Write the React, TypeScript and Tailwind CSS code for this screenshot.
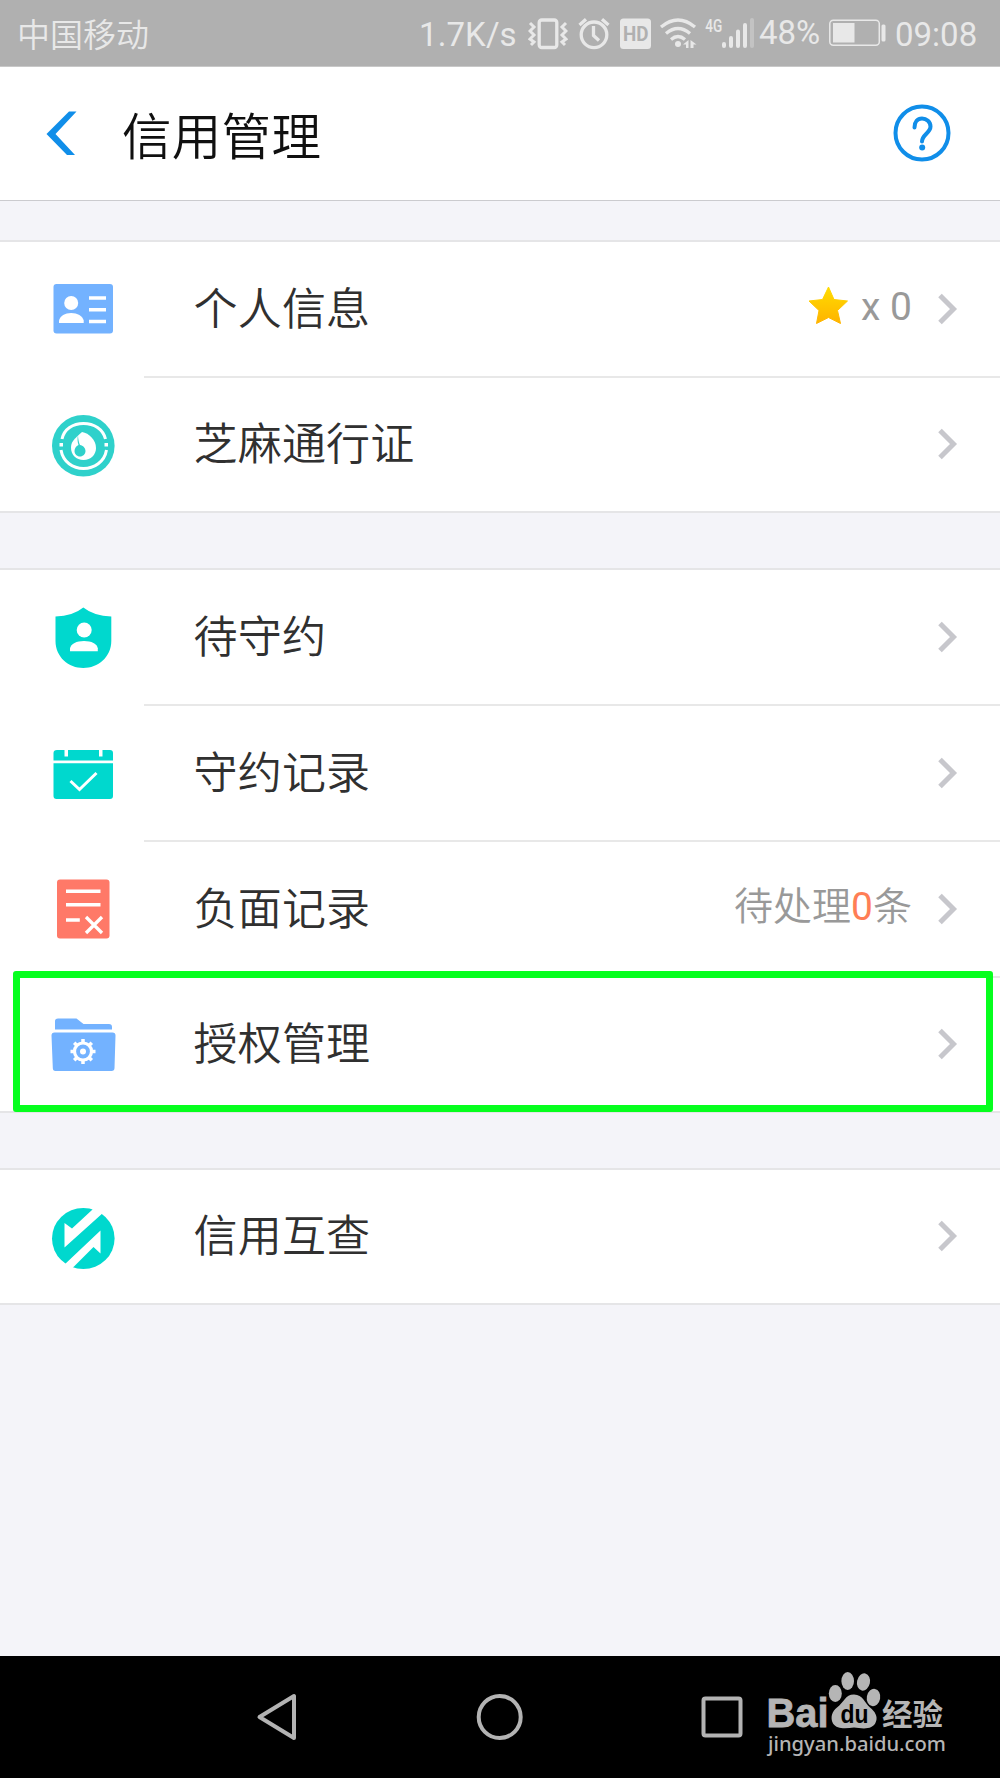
import React from "react";

const cjk = "font-['Roboto','Noto_Sans_CJK_SC',sans-serif]";

function StatusBar() {
  return (
    <div className="flex h-[67px] shrink-0 items-start border-b border-[#c8c8c8] bg-[#b0b0b0] text-[33px] leading-[70px] text-[#e8e8e8]">
      <span className="ml-[17px] w-[402px] font-[350] leading-[71px]">中国移动</span>
      <span className="w-[109px] tracking-[0.1px]">1.7K/s</span>
      <svg className="h-[66px] w-10 shrink-0" viewBox="528 0 40 66" fill="none" stroke="#e8e8e8">
        <rect x="539.2" y="20" width="17.6" height="27.5" rx="2.5" strokeWidth="3.3" />
        <path d="M530 23l4 4-4 4 4 4-4 4 4 3-3 3M566 23l-4 4 4 4-4 4 4 4-4 3 3 3" strokeWidth="3" />
      </svg>
      <svg className="ml-[10px] h-[66px] w-8 shrink-0" viewBox="578 0 32 66" fill="none" stroke="#e8e8e8" strokeWidth="3.3">
        <circle cx="594" cy="34.8" r="12.8" />
        <path d="M593.5 26v9.5l5.5 5M579.5 25l6.5-5.7M608.5 25l-6.500-5.700" />
      </svg>
      <svg className="ml-[10px] h-[66px] w-[31px] shrink-0" viewBox="620 0 31 66">
        <rect x="620" y="18.500" width="31" height="30.500" rx="3.500" fill="#e8e8e8" />
        <text x="623" y="41" fontSize="20" fontWeight="700" fill="#b0b0b0" textLength="25.500" lengthAdjust="spacingAndGlyphs">HD</text>
      </svg>
      <svg className="ml-[8px] h-[66px] w-[38px] shrink-0" viewBox="659 0 38 66" fill="none" stroke="#e8e8e8" strokeWidth="3.300">
        <path d="M661 27Q678 13 695 27M666 33.500Q678 23.500 690 33.500M671 39.500Q678 33.500 685 39.500" />
        <circle cx="678" cy="44" r="3" fill="#e8e8e8" stroke="none" />
        <path d="M683 44.500l5.500-4.500v8h-2.500v-3.500zM690.500 40l6 4.500h-3v3.500h-3z" fill="#e8e8e8" stroke="none" />
      </svg>
      <svg className="ml-[6px] h-[66px] w-[21px] shrink-0" viewBox="703 0 21 66" fill="#e8e8e8">
        <text x="705.300" y="31.500" fontSize="19" fontWeight="500" textLength="17" lengthAdjust="spacingAndGlyphs">4G</text>
      </svg>
      <svg className="-ml-[2px] h-[66px] w-[33px] shrink-0" viewBox="722 0 33 66" stroke="#e8e8e8" strokeWidth="4" strokeLinecap="round">
        <path d="M724 44v2M731 38v8M738 31.500V46M745 25v21" />
        <path d="M752 20v26" stroke="#c3c3c3" />
      </svg>
      <span className="ml-[4px] w-[69px] leading-[66px]">48%</span>
      <svg className="h-[66px] w-[59px] shrink-0" viewBox="828 0 59 66" fill="none">
        <rect x="829.800" y="20.200" width="49.500" height="25" rx="3.500" stroke="#e8e8e8" strokeWidth="1.500" />
        <path d="M833 23h21.500v19.500H833z" fill="#e8e8e8" />
        <rect x="881.500" y="24.500" width="4" height="17" rx="1.500" fill="#e8e8e8" />
      </svg>
      <span className="ml-[8px]">09:08</span>
    </div>
  );
}

function Header() {
  return (
    <header className="flex h-[134px] shrink-0 items-center border-b border-[#cbcbcf] bg-white">
      <svg className="-mt-[2px] ml-[46px] h-[44px] w-[32px]" viewBox="46 111 32 44" fill="#108ee9">
        <path d="M69 111.500h7.500L55.500 134l19.500 21h-8L46.500 134z" />
      </svg>
      <h1 className="ml-[44px] mt-[11px] text-[49.500px] font-[350] leading-none tracking-[0.3px] text-[#101010]">信用管理</h1>
      <svg className="-mt-[1px] ml-auto mr-[48px] h-[60px] w-[60px]" viewBox="892 103 60 60" fill="none" stroke="#108ee9">
        <circle cx="922" cy="133" r="26.500" strokeWidth="4" />
        <path d="M914.500 127.500c0-6 3-9 7.500-9s8.500 3.500 8.500 8c0 6.500-8.500 8-8.500 15" strokeWidth="4" strokeLinecap="round" />
        <circle cx="922.200" cy="147.500" r="3" fill="#108ee9" stroke="none" />
      </svg>
    </header>
  );
}

const IdCard = () => (
  <>
    <rect x="53.500" y="284" width="59.500" height="49.500" rx="3" fill="#73b2ff" />
    <g fill="#fff">
      <circle cx="71.200" cy="303" r="7" />
      <path d="M59 323v-2.500c1-4.500 6-7.500 12.200-7.500s11.500 3 12.500 7.500v2.500z" />
      <path d="M89 296.200h17v3.600H89zM89 308h17v3.600H89zM89 319.700h17v3.600H89z" />
    </g>
  </>
);

const Pass = () => (
  <>
    <ellipse cx="83.300" cy="445.800" rx="31.300" ry="30.800" fill="#2fd1cb" />
    <g fill="none" stroke="#fff" strokeWidth="3">
      <path d="M62 439C64 429 73 423.500 83.500 423.500S103 429 105.500 439M61 450C63 462 73 468.500 83.500 468.500S104.500 462 106.500 450" />
    </g>
    <path d="M59.500 443h3.500v3.500h-3.500zM104.500 443h3.500v3.500h-3.500z" fill="#fff" />
    <path d="M82 432c7 1 14 8 14 16 0 6.500-5 12-12.500 12S71 455 71 447.500c0-5 3-8 6-11z" fill="#fff" />
    <path d="M78 435c0 4 1 8 2 10 3 .5 5.500 3 5.500 6 0 3-2.500 5.500-5.500 5.500s-5.500-2.500-5.500-5.500c0-2.500 1.500-5 4-6-1-3-1.300-6-.5-10z" fill="#2fd1cb" />
  </>
);

const Shield = () => (
  <>
    <path d="M83.300 607.500Q94 616 111.300 616.500V641C111.300 657 98 668 83.300 668S55.500 657 55.500 641V616.500Q73 616 83.300 607.500z" fill="#00d8ce" />
    <circle cx="84.200" cy="630" r="7.500" fill="#fff" />
    <path d="M70 651.300v-3c1-4.500 6.500-7.300 14-7.300s13 2.800 13.800 7.300v3z" fill="#fff" />
  </>
);

const Calendar = () => (
  <>
    <path d="M57 750h7.500v6.500h3.500V750h31v6.500h3.500V750h7.500q3 0 3 3v7.500H53.500V753q0-3 3.500-3zM53.500 763.300H113V796q0 3-3 3H56.500q-3 0-3-3z" fill="#00d8ce" />
    <path d="M70.500 781l9 8.500L96.500 773" fill="none" stroke="#fff" strokeWidth="3" />
  </>
);

const Negative = () => (
  <>
    <rect x="57" y="879.500" width="52.500" height="59" rx="3" fill="#ff7968" />
    <path d="M66 891.300h34.500M66 904.700h34.500M66 920h13.800" stroke="#fff" strokeWidth="3.500" />
    <path d="M86 917l16 16M102 917l-16 16" stroke="#fff" strokeWidth="3.300" />
  </>
);

const Folder = () => (
  <>
    <path d="M55 1029.500V1021q0-2.500 3-2.500h18.500l7 5.500H109q3 0 3 3v2.500z" fill="#73b2ff" />
    <path d="M54.500 1032.500h58q3 0 3 3l-1 32.500q0 3-3 3h-56q-2.700 0-2.700-3L51.500 1035.500q0-3 3-3z" fill="#73b2ff" />
    <circle cx="83" cy="1051.500" r="8.500" fill="none" stroke="#fff" strokeWidth="3.200" />
    <circle cx="83" cy="1051.500" r="3" fill="#fff" />
    <path d="M83 1039v4M83 1060v4M70.500 1051.500h4M91.500 1051.500h4M74.200 1042.700l2.800 2.800M89 1057.500l2.800 2.800M74.200 1060.300l2.800-2.800M89 1045.500l2.800-2.800" stroke="#fff" strokeWidth="3.500" />
  </>
);

const Exchange = () => (
  <>
    <ellipse cx="83.300" cy="1237.500" rx="31.300" ry="30.500" fill="#00d8ce" />
    <path d="M92 1209l5-7 7 9L64.500 1246.500V1222l7.500 5.500zM74 1265.500l-6 5-4-6.500L100.500 1229.500V1252.500L93.500 1246z" fill="#fff" />
  </>
);

type RowProps = {
  icon: React.ReactNode;
  box: string;
  label: string;
  extra?: React.ReactNode;
  last?: boolean;
};

function Row({ icon, box, label, extra, last }: RowProps) {
  return (
    <li className={last ? "flex h-[133px] items-stretch" : "flex h-[136px] items-stretch"}>
      <svg className="h-[134px] w-[144px] shrink-0" viewBox={box}>{icon}</svg>
      <div className={last ? "flex flex-1 items-center" : "flex flex-1 items-center border-b-2 border-[#e8e8e8]"}>
        <span className="ml-[49.500px] mt-[1px] text-[44px] font-[350] leading-none tracking-[0.2px] text-[#303030]">{label}</span>
        <div className="ml-auto mr-[26px] -mt-[4px] flex items-center text-[39px] leading-none text-[#999]">{extra}</div>
        <svg className="-mt-[1px] mr-[42px] h-8 w-5" viewBox="0 0 20 32" fill="none" stroke="#c7c7cc" strokeWidth="5">
          <path d="M2 2.500L15.500 16 2 29.500" />
        </svg>
      </div>
    </li>
  );
}

function Group({ children }: { children: React.ReactNode }) {
  return <ul className="relative border-y-2 border-[#e5e5e7] bg-white">{children}</ul>;
}

function Watermark() {
  return (
    <div className="absolute left-[766px] top-[12px] h-[100px] w-[184px] text-[#b5b5b5]">
      <svg className="h-[66px] w-[184px]" viewBox="766 1668 184 66" fill="#b5b5b5">
        <text x="766.500" y="1726.500" fontFamily="Liberation Sans, sans-serif" fontWeight="700" fontSize="40" textLength="62" lengthAdjust="spacingAndGlyphs" stroke="#b5b5b5" strokeWidth="0.800">Bai</text>
        <ellipse cx="835.300" cy="1693.500" rx="6.500" ry="8.500" />
        <ellipse cx="847.700" cy="1681" rx="6.300" ry="9" />
        <ellipse cx="863.500" cy="1682" rx="6.500" ry="8.700" transform="rotate(12 863.500 1682)" />
        <ellipse cx="873.500" cy="1697.500" rx="6.700" ry="8.700" transform="rotate(10 873.500 1697.500)" />
        <path d="M854 1694.500c9 0 11 9 16 13 5 4 8 9 6 14-3 9-14 7-22 6-8 1-17 2-21-4-3-6-1-12 4-16 7-5 8-13 17-13z" />
        <text x="840.500" y="1722.500" fontFamily="Liberation Sans, sans-serif" fontWeight="700" fontSize="25" fill="#000" textLength="28" lengthAdjust="spacingAndGlyphs">du</text>
        <text x="882" y="1724.500" fontFamily="Noto Sans CJK SC, sans-serif" fontWeight="700" fontSize="30" textLength="61" lengthAdjust="spacingAndGlyphs">经验</text>
      </svg>
      <div className="-mt-[6px] ml-[2px] whitespace-nowrap font-['Noto_Sans',sans-serif] text-[20.200px] font-medium leading-[30px]">
        jingyan.baidu.com
      </div>
    </div>
  );
}

function NavBar() {
  return (
    <nav className="relative mt-auto flex h-[122px] shrink-0 items-center bg-black">
      <svg className="ml-[255px] h-[50px] w-[44px]" viewBox="255 1692 44 50" fill="none" stroke="#b3b3b3" strokeWidth="4" strokeLinejoin="round">
        <path d="M259.500 1717L294 1696v42z" />
      </svg>
      <svg className="ml-[176px] h-[50px] w-[50px]" viewBox="475 1692 50 50" fill="none" stroke="#b3b3b3" strokeWidth="4">
        <circle cx="499.700" cy="1717" r="21" />
      </svg>
      <svg className="ml-[172px] h-[50px] w-[50px]" viewBox="697 1692 50 50" fill="none" stroke="#b3b3b3" strokeWidth="4">
        <rect x="703.500" y="1698.500" width="37" height="37" rx="2" />
      </svg>
      <Watermark />
    </nav>
  );
}

export default function App() {
  return (
    <div className={`flex h-[1778px] w-[1000px] flex-col overflow-hidden bg-[#f4f4f9] ${cjk}`}>
      <StatusBar />
      <Header />
      <main className="flex flex-col pt-[39px]">
        <Group>
          <Row
            box="0 242 144 134"
            icon={<IdCard />}
            label="个人信息"
            extra={
              <>
                <svg className="-mt-[4px] mr-[13px] h-[40px] w-[40px]" viewBox="807 285 40 40">
                  <defs>
                    <linearGradient id="gold" x1="0" y1="0" x2="0" y2="1">
                      <stop offset="0" stopColor="#ffdc00" />
                      <stop offset="1" stopColor="#ffb300" />
                    </linearGradient>
                  </defs>
                  <path
                    d="M827.500 287l5.500 12.500 13.500 1.500-10 9.500 3 13-12-6-12 6 2.500-13-10-9.500 13.500-1.500z"
                    fill="url(#gold)"
                    stroke="url(#gold)"
                    strokeWidth="1"
                    strokeLinejoin="round"
                  />
                </svg>
                <span>x 0</span>
              </>
            }
          />
          <Row box="0 378 144 134" icon={<Pass />} label="芝麻通行证" last />
        </Group>
        <div className="mt-[55px]">
          <Group>
            <Row box="0 570 144 134" icon={<Shield />} label="待守约" />
            <Row box="0 706 144 134" icon={<Calendar />} label="守约记录" />
            <Row
              box="0 842 144 134"
              icon={<Negative />}
              label="负面记录"
              extra={<span className="font-[350]">待处理<span className="font-normal text-[#ff7e55]">0</span>条</span>}
            />
            <Row box="0 978 144 134" icon={<Folder />} label="授权管理" last />
            <li className="pointer-events-none absolute left-[13px] top-[401px] h-[141px] w-[980px] rounded-[3px] border-[7px] border-[#06ff1e]" />
          </Group>
        </div>
        <div className="mt-[55px]">
          <Group>
            <Row box="0 1169 144 134" icon={<Exchange />} label="信用互查" last />
          </Group>
        </div>
      </main>
      <NavBar />
    </div>
  );
}
